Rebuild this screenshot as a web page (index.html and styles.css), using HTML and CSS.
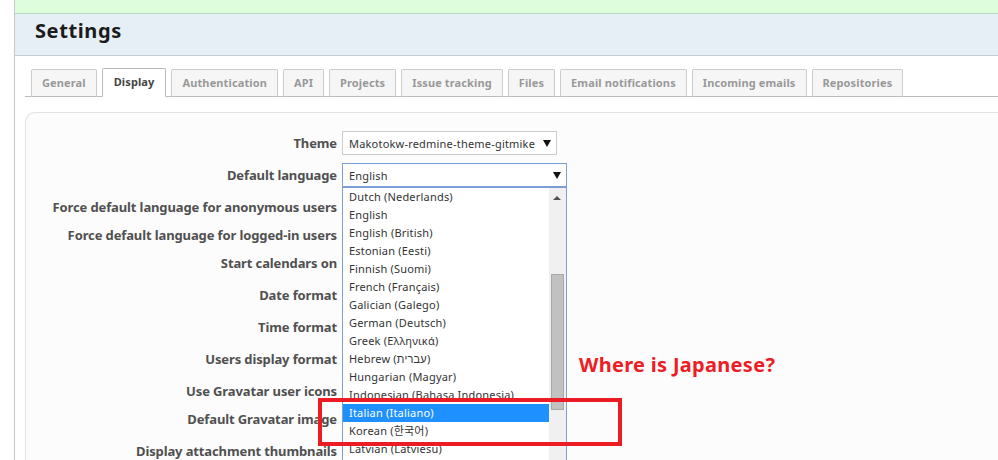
FILE: index.html
```html
<!DOCTYPE html>
<html>
<head>
<meta charset="utf-8">
<link rel="stylesheet" href="styles.css">
</head>
<body>
<div class="page">
  <div class="flash"></div>
  <div class="header"><h2>Settings</h2></div>
  <div class="content">
    <ul class="tabs">
      <li>General</li>
      <li class="active">Display</li>
      <li>Authentication</li>
      <li>API</li>
      <li>Projects</li>
      <li>Issue tracking</li>
      <li>Files</li>
      <li>Email notifications</li>
      <li>Incoming emails</li>
      <li>Repositories</li>
    </ul>
    <div class="box">
      <div class="row sel"><label>Theme</label><div class="select theme"><span>Makotokw-redmine-theme-gitmike</span><i class="arrow"></i></div></div>
      <div class="row sel"><label>Default language</label><div class="select lang"><span>English</span><i class="arrow"></i></div></div>
      <div class="row chk"><label>Force default language for anonymous users</label></div>
      <div class="row chk"><label>Force default language for logged-in users</label></div>
      <div class="row sel"><label>Start calendars on</label></div>
      <div class="row sel"><label>Date format</label></div>
      <div class="row sel"><label>Time format</label></div>
      <div class="row sel"><label>Users display format</label></div>
      <div class="row chk"><label>Use Gravatar user icons</label></div>
      <div class="row sel"><label>Default Gravatar image</label></div>
      <div class="row sel"><label>Display attachment thumbnails</label></div>

      <div class="dropdown">
        <ul class="options">
          <li>Dutch (Nederlands)</li>
          <li>English</li>
          <li>English (British)</li>
          <li>Estonian (Eesti)</li>
          <li>Finnish (Suomi)</li>
          <li>French (Français)</li>
          <li>Galician (Galego)</li>
          <li>German (Deutsch)</li>
          <li>Greek (Ελληνικά)</li>
          <li>Hebrew (עברית)</li>
          <li>Hungarian (Magyar)</li>
          <li>Indonesian (Bahasa Indonesia)</li>
          <li class="selected">Italian (Italiano)</li>
          <li>Korean (한국어)</li>
          <li>Latvian (Latviesu)</li>
        </ul>
        <div class="scrollbar">
          <i class="up"></i>
          <div class="thumb"></div>
        </div>
      </div>
      <div class="callout">Where is Japanese?</div>
      <div class="redbox"></div>
    </div>
  </div>
</div>
</body>
</html>
```
FILE: styles.css
```css
* { box-sizing: border-box; }
html, body { margin: 0; padding: 0; background: #fff; height: 460px; overflow: hidden; }
body { font-family: "Noto Sans", "Noto Sans CJK JP", sans-serif; color: #333; }

.page {
  margin-left: 14px;
  border-left: 1px solid #c8c8c8;
  height: 460px;
}
.flash {
  height: 14px;
  background: #ddfddd;
  border-bottom: 1px solid #b8d8c0;
}
.header {
  height: 42px;
  background: #e5eff5;
  border-bottom: 1px solid #c8ccce;
  padding: 5px 0 0 20px;
}
.header h2 {
  margin: 0;
  font-size: 20px;
  line-height: 24px;
  font-weight: 700;
  color: #1b1b1b;
  letter-spacing: 0.6px;
}
.content { padding: 12px 0 0 10px; }

.tabs {
  list-style: none;
  margin: 0;
  padding: 0 0 0 6px;
  display: flex;
  align-items: flex-end;
  gap: 5px;
  border-bottom: 1px solid #bbb;
  height: 29px;
}
.tabs li {
  height: 28px;
  margin-bottom: -1px;
  border: 1px solid #ccc;
  border-bottom-color: #bbb;
  background: #f6f6f6;
  color: #999;
  font-size: 11px;
  font-weight: 700;
  letter-spacing: 0.12px;
  padding: 0 10px 2px 10px;
  display: flex;
  align-items: center;
  border-radius: 2px 2px 0 0;
}
.tabs li.active {
  height: 29px;
  background: #fff;
  color: #444;
  border-color: #bbb;
  border-bottom-color: #fff;
  padding-left: 11px;
  padding-right: 11px;
}

.box {
  position: relative;
  margin-top: 15px;
  background: #fcfcfc;
  border: 1px solid #e2e2e2;
  border-right: none;
  border-bottom: none;
  border-radius: 10px 0 0 0;
  padding: 14px 0 0 0;
  height: 348px;
  overflow: hidden;
}
.row {
  display: flex;
  align-items: center;
}
.row.sel { height: 32px; }
.row.chk { height: 28px; padding-top: 4px; }
.row label {
  width: 316px;
  text-align: right;
  font-size: 13px;
  font-weight: 700;
  letter-spacing: -0.12px;
  color: #505050;
  padding-right: 5px;
  white-space: nowrap;
}
.select {
  position: relative;
  height: 24px;
  border: 1px solid #ccc;
  background: #fff;
  font-size: 11px;
  letter-spacing: 0.2px;
  color: #333;
  display: flex;
  align-items: center;
  padding-left: 6px;
}
.select.theme { width: 215px; }
.select.lang { width: 225px; border-color: #7c9ed6; }
.arrow {
  position: absolute;
  right: 5px;
  top: 8px;
  width: 0; height: 0;
  border-left: 4px solid transparent;
  border-right: 4px solid transparent;
  border-top: 7px solid #111;
}

.dropdown {
  position: absolute;
  left: 316px;
  top: 74px;
  bottom: 0;
  width: 225px;
  background: #fff;
  border: 1px solid #7c9ed6;
  border-bottom: none;
  display: flex;
}
.options {
  list-style: none;
  margin: 0;
  padding: 0;
  flex: 1;
}
.options li {
  height: 18px;
  line-height: 18px;
  font-size: 11px;
  letter-spacing: 0.2px;
  padding-left: 6px;
  color: #333;
  white-space: nowrap;
  overflow: hidden;
}
.options li.selected { background: #1e90ff; color: #fff; }
.scrollbar {
  position: relative;
  width: 17px;
  background: #f0f0f0;
}
.scrollbar .up {
  position: absolute;
  left: 4px;
  top: 8px;
  width: 0; height: 0;
  border-left: 4px solid transparent;
  border-right: 4px solid transparent;
  border-bottom: 4px solid #505050;
}
.thumb {
  position: absolute;
  left: 2px;
  top: 86px;
  width: 13px;
  height: 136px;
  background: #c1c1c1;
  border: 1px solid #a8a8a8;
}
.callout {
  position: absolute;
  left: 553px;
  top: 238px;
  font-size: 20px;
  font-weight: 700;
  letter-spacing: 0.3px;
  color: #ee1c25;
}
.redbox {
  position: absolute;
  left: 292px;
  top: 285px;
  width: 304px;
  height: 48px;
  border: 4px solid #ec1c24;
}
```
